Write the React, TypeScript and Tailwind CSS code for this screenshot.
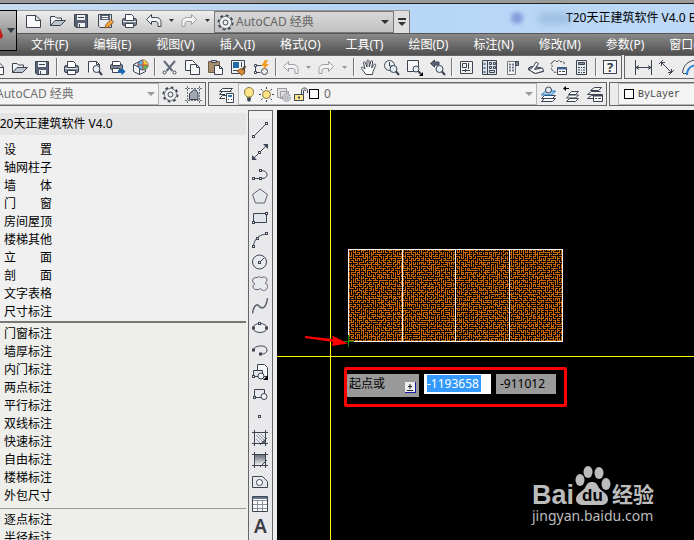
import type { ReactNode } from 'react';

interface IconProps {
  children: ReactNode;
  size?: 16 | 17;
  muted?: boolean;
}

function Icon({ children, size = 17, muted = false }: IconProps) {
  return (
    <svg
      width={size}
      height={size}
      viewBox={`0 0 ${size} ${size}`}
      fill="none"
      stroke={muted ? '#9a9da2' : '#3c4452'}
      className="shrink-0"
      aria-hidden="true"
    >
      {children}
    </svg>
  );
}

const lens = (
  <>
    <circle cx="10.5" cy="10" r="3.5" fill="#e4eef6" />
    <path d="M13 12.5l3 3.5" strokeWidth="2" />
  </>
);

const undoPath = 'M1.5 7.5l5-5v3h4c4 0 5.5 2 5.5 5v4h-3v-2.500c0-2-1-2.500-3-2.500H6.500v3z';

const icons = {
  new: <path d="M1.500 3.500h9.500l4.500 4.500v7.500h-14zM10.500 3.500v5h5" fill="#fafafa" />,
  open: (
    <>
      <path d="M1.500 13.500v-9h4.500l1.500 1.500h5v3" fill="#f4f5f6" />
      <path d="M1.500 13.500l4.500-5h10.500l-5 5z" fill="#bcc5ce" />
    </>
  ),
  save: (
    <>
      <path d="M1.500 2.500h13v13h-11.500l-1.500-1.500z" fill="#566273" />
      <path d="M4 3h8v5H4zM5 11h7v4H5z" fill="#f1f3f5" stroke="none" />
      <path d="M6.500 12v3M5 5.500h6" />
    </>
  ),
  saveAs: (
    <>
      <path d="M1.500 2.500h13v13h-11.500l-1.500-1.500z" fill="#e8eaec" />
      <path d="M3 3h10v5H3z" fill="#566273" stroke="none" />
      <path d="M5 4.500h6M5 6.500h6" stroke="#fff" />
      <path d="M8 16l1-3.500 5-5 2.500 2.500-5 5z" fill="#f3a53c" stroke="#8a5a2a" />
    </>
  ),
  print: (
    <>
      <rect x="1.500" y="6.500" width="14" height="7" rx="1.500" fill="#7c8693" />
      <path d="M4.500 8.500v-6h6l2 2v4z" fill="#fff" />
      <path d="M2 9.500h13" stroke="#e1e4e7" />
      <path d="M4.500 11.500h8v4h-8z" fill="#fff" />
    </>
  ),
  preview: (
    <>
      <path d="M2.500 13.500v-11h8l3 3v5" fill="#fafafa" />
      <path d="M10.500 2.500v3h3" />
      {lens}
    </>
  ),
  publish: (
    <>
      <rect x="1.500" y="5.500" width="12" height="5" rx="1" fill="#7c8693" />
      <path d="M3.500 6.500v-4h7l1 1v3z" fill="#fff" />
      <path d="M3.500 9.500h7v4h-7z" fill="#fff" />
      <path d="M9 11h3.500V8.500l4 4-4 4V14H9z" fill="#1768b5" stroke="none" />
    </>
  ),
  dwf: (
    <>
      <path d="M1.500 5.500l6-3 6 3v7l-6 3-6-3z" fill="#f3f4f5" />
      <path d="M1.500 5.500l6 3v7" />
      <circle cx="11" cy="6" r="5" fill="#5db6df" stroke="#547" />
      <path d="M11 6V1a5 5 0 0 1 5 5z" fill="#f0c93c" stroke="none" />
      <path d="M11 6h5a5 5 0 0 1-5 5z" fill="#68b44c" stroke="none" />
      <path d="M6 6h10M11 1v10" stroke="#d34b36" />
    </>
  ),
  cut: (
    <>
      <path d="M3 2l8.500 10M14 2L5.500 12" stroke="#646c79" strokeWidth="2" />
      <circle cx="3.500" cy="13.500" r="1.500" fill="#fff" />
      <circle cx="13.500" cy="13.500" r="1.500" fill="#fff" />
    </>
  ),
  copy: (
    <>
      <path d="M1.500 11.500v-10h7l3 3v7z" fill="#fafafa" />
      <path d="M6.500 15.500v-10h6l3 3v7z" fill="#fafafa" />
      <path d="M12.500 5.500v3h3" />
    </>
  ),
  paste: (
    <>
      <path d="M1.500 2.500h11v11h-11z" fill="#a98e6e" stroke="#6f5d49" />
      <path d="M4.500 1.500h5v2h-5z" fill="#c9ced4" />
      <path d="M7.500 15.500v-9h5l3 3v6z" fill="#fafafa" />
      <path d="M12.500 6.500v3h3" />
    </>
  ),
  match: (
    <>
      <path d="M1.500 1.500h13v13h-13z" fill="#f2f5f8" />
      <path d="M3 3h6v6H3z" fill="#236aa9" stroke="none" />
      <path d="M11.500 3v5M3 11.500h5" />
      <path d="M15.500 7l-3 3.500" stroke="#5c4631" strokeWidth="2" />
      <path d="M7 12l4-2.500 4 3-3 4z" fill="#d98a35" stroke="#8a5a2a" />
    </>
  ),
  blockEdit: (
    <>
      <path d="M2.500 13.500v-7h8M2.500 13.500h5" />
      <path d="M1.500 12.500h2v2h-2zM1.500 5.500h2v2h-2z" fill="#fff" />
      <circle cx="11.500" cy="12.500" r="3" fill="#f0f0f0" />
      <path d="M12 1L8 7h3l-1 4 6-6h-3l2-4z" fill="#f49b26" stroke="none" />
    </>
  ),
  undo: <path d={undoPath} fill="#f4f4f5" />,
  redo: <path d={undoPath} fill="#f4f4f5" transform="matrix(-1 0 0 1 17 0)" />,
  pan: (
    <path
      d="M6 15.500L1.500 9.500c-.7-1.200.6-2 1.600-1L5 10 3.500 4c-.2-1.300 1.400-1.600 1.800-.5L7 8V2c0-1.300 1.800-1.300 2 0l.3 6 1.500-5.500c.3-1.200 2-.8 1.800.5L11.700 9l2.300-3.500c.8-1 2.200-.2 1.600 1L13 12.500l-.5 3z"
      fill="#fff"
    />
  ),
  zoomRealtime: (
    <>
      <circle cx="6.500" cy="6.500" r="5" fill="#eef2f6" />
      <path d="M6.500 3v4h3.500" />
      {lens}
    </>
  ),
  zoomWindow: (
    <>
      <path d="M1.500 1.500h11v11h-11z" fill="#f6f7f8" />
      <circle cx="10" cy="10" r="3" fill="#e4eef6" />
      <path d="M12 12l3 3" strokeWidth="2" />
      <path d="M17 13v4h-4z" fill="#000" stroke="none" />
    </>
  ),
  zoomPrevious: (
    <>
      <path d="M1.500 4.500l4-3.500v2H10v3H5.500v2z" fill="#596576" />
      {lens}
    </>
  ),
  properties: (
    <>
      <path d="M2.500 2.500h12v12h-12z" fill="#f1f1ee" />
      <path d="M4.500 4.500h4v4h-4zM10.500 4v6M4 11.500h8M7.500 10v3" />
    </>
  ),
  designCenter: (
    <>
      <path d="M1.500 1.500h14v14h-14z" fill="#dfe3e7" />
      <path d="M6.500 1.500v14" />
      <path d="M3.500 4v2M3.500 8v2M3.500 12v2" strokeWidth="2" stroke="#5b7ba2" />
      <path d="M8.500 3.500h2v2h-2zM12.500 3.500h2v2h-2zM8.500 7.500h2v2h-2zM12.500 7.500h2v2h-2zM8.500 11.500h5v2h-5z" />
    </>
  ),
  palettes: (
    <>
      <path d="M3.500 2.500h8v13h-8z" fill="#f3f3f3" stroke="#727782" />
      <path d="M11.500 2.500h3v4h-3z" fill="#7c8693" />
      <path d="M5 5.500h2M8 5.500h2M5 8.500h2M8 8.500h2M5 11.500h2M8 11.500h2" stroke="#747b86" strokeWidth="2" />
    </>
  ),
  sheetSet: (
    <>
      <path d="M1 9.500l3-2 9.500 1 3 4-9 2z" fill="#8d96a1" />
      <path d="M1 10.500c5 0 6-5 8-7.500l2.500 1.500-4 6 8-1.500 1 3-8 2.500z" fill="#f5f6f7" />
    </>
  ),
  markup: (
    <>
      <path d="M3 3c1-2 3-2 4 0 1-2 3-2 4 0 2-1 4 0 3 3M3 3C0 4 1 6 2.500 7 1 8 1 11 3 11.500 3 13 5 14 7 13" strokeDasharray="3 1" />
      <path d="M7.500 8.500h9v7h-9z" fill="#fff" />
      <path d="M8 9.500h8" stroke="#3e6b9f" strokeWidth="2" />
      <path d="M9 12.500h2M12 12.500h3" />
    </>
  ),
  calculator: (
    <>
      <path d="M3.500 1.500h10v14h-10z" fill="#e7eaed" />
      <path d="M5.500 3.500h6v2h-6z" fill="#8e98a5" />
      <path d="M5 8.500h2M8 8.500h1M10 8.500h2M5 11h2M8 11h1M10 11h2M5 13.500h2M8 13.500h1M10 13.500h2" />
    </>
  ),
  dimLinear: <path d="M.500 1v15M16.500 1v15M1 8.500h15M4 6.500l-3 2 3 2M13 6.500l3 2-3 2" />,
  dimAligned: <path d="M1 5l4-4M11 16l5-5M3.500 3.500l10 10M3.500 7v-3.500H7M10 13.500h3.500V10" />,
  dimArc: (
    <>
      <path d="M1.500 14C2 6 8 1 16 1M2 14.500h3" />
      <path d="M6 16c0-6 4-10 11-10" stroke="#2f7fd1" strokeWidth="2" />
    </>
  ),
  gear: (
    <>
      <circle cx="8.500" cy="8.500" r="7" strokeWidth="2" strokeDasharray="2.750 2.748" />
      <circle cx="8.500" cy="8.500" r="6" fill="#f4f4f4" stroke="#6a717d" />
      <circle cx="8.500" cy="8.500" r="2.500" />
    </>
  ),
  workspace: (
    <>
      <path d="M2.500 0v17M14.500 0v17M0 2.500h17M0 14.500h17" stroke="#6a717d" strokeDasharray="2 1" />
      <path d="M4.500 13.500V7.500L8.500 4H11l2 3v6.500z" fill="#a0a6b0" />
    </>
  ),
  layerManager: (
    <>
      <path d="M1.500 12.500l3-3H8M1.500 8.500l3-3h9M1.500 12.500H7M1.500 8.500H7M4.500 2.500h10l-3 3h-10z" fill="#f7f7f7" />
      <path d="M8.500 7.500h7v9h-7z" fill="#fff" />
      <path d="M10 10h4" stroke="#2f74b5" strokeWidth="2" />
      <path d="M10 13.500h1M13 13.500h1" />
    </>
  ),
  layerCurrent: (
    <>
      <path d="M1.500 15.500l3-3h11l-3 3zM1.500 12.500l3-3h11l-3 3z" fill="#f7f7f7" />
      <path d="M1.500 9l4-4h10l-4 4z" fill="#a9d3ef" stroke="#1c74bb" />
      <circle cx="8.500" cy="4" r="3" fill="#dfeaf2" />
    </>
  ),
  layerPrevious: (
    <>
      <path d="M3.500 15.500l3-3h9l-3 3zM3.500 12l3-3h9l-3 3zM5.500 8.500l3-3h7l-3 3z" fill="#f7f7f7" />
      <path d="M3 0L0 2.500 3 5V3h3V2H3z" fill="#000" stroke="none" />
    </>
  ),
  layerStates: (
    <>
      <path d="M1.500 12.500l4-3h8M1.500 8.500l4-3h9M4.500 4.500l4-3h7l-3 3zM1.500 12.500H7M1.500 8.500h12" fill="#f7f7f7" />
      <path d="M7.500 8.500h9v7h-9z" fill="#fff" />
      <path d="M8 9.500h8" strokeWidth="2" />
      <path d="M9 12.500h2M12 12.500h3" />
    </>
  ),
  bulb: (
    <>
      <path d="M6 11C4 9 3.500 8 3.500 6c0-6 9-6 9 0 0 2-.5 3-2.500 5z" fill="#ffe58a" stroke="#8d7435" />
      <path d="M6 12.500h4M6.500 14.500h3" strokeWidth="2" />
    </>
  ),
  sun: (
    <>
      <circle cx="8.500" cy="8.500" r="4" fill="#ffe58a" stroke="#8d7435" />
      <path d="M8.500 1v2M8.500 14v2M1 8.500h2M14 8.500h2M3 3l1.500 1.500M12.500 12.500L14 14M14 3l-1.500 1.500M4.500 12.500L3 14" />
    </>
  ),
  freeze: (
    <>
      <path d="M2.500 2.500h9v9h-9zM5.500 5.500h8v7h-8z" fill="#e3e3e3" />
      <circle cx="11.500" cy="11.500" r="4" fill="#c5c7ca" strokeDasharray="2 1" />
      <circle cx="11.500" cy="11.500" r="1" fill="#fff" />
    </>
  ),
  unlock: (
    <>
      <path d="M2.500 8.500h9v6h-9z" fill="#ffe58a" />
      <path d="M9.500 8.500V5c0-4 6-4 6 0v2M11.500 8V5c0-1.500 2-1.500 2 0" />
      <path d="M7 10.500v2" strokeWidth="2" />
    </>
  ),
};

type IconName = keyof typeof icons;

interface ToolProps {
  icon: IconName;
  label: string;
  muted?: boolean;
}

function Tool({ icon, label, muted }: ToolProps) {
  return (
    <button aria-label={label} className="flex h-full w-[23px] shrink-0 items-center justify-center">
      <Icon muted={muted}>{icons[icon]}</Icon>
    </button>
  );
}

function Caret({ label, muted = false }: { label: string; muted?: boolean }) {
  return (
    <button aria-label={label} className="flex h-full w-[13px] shrink-0 items-center justify-center">
      <svg width="5" height="3" className={muted ? 'fill-[#999999]' : 'fill-[#333333]'} aria-hidden="true">
        <path d="M0 0h5L2.500 3z" />
      </svg>
    </button>
  );
}

function Divider() {
  return <span className="mx-[2px] h-[18px] w-[2px] shrink-0 border-l border-[#777777] bg-[#f8f8f8]" />;
}

function ComboArrow({ className }: { className: string }) {
  return (
    <svg width="8" height="4" className={`shrink-0 ${className}`} aria-hidden="true">
      <path d="M0 0h8L4 4z" />
    </svg>
  );
}

const menus = [
  '文件(F)', '编辑(E)', '视图(V)', '插入(I)', '格式(O)', '工具(T)',
  '绘图(D)', '标注(N)', '修改(M)', '参数(P)', '窗口(W)',
];

const commandGroups = [
  ['设置', '轴网柱子', '墙体', '门窗', '房间屋顶', '楼梯其他', '立面', '剖面', '文字表格', '尺寸标注'],
  ['门窗标注', '墙厚标注', '内门标注', '两点标注', '平行标注', '双线标注', '快速标注', '自由标注', '楼梯标注', '外包尺寸'],
  ['逐点标注', '半径标注'],
];

const grip = (x: number, y: number) => (
  <rect x={x} y={y} width="2" height="2" fill="#fff" />
);

const drawTools: { label: string; art: ReactNode }[] = [
  { label: '直线', art: <><path d="M2 14L14 2" />{grip(0.5, 13.5)}{grip(13.5, 0.5)}</> },
  {
    label: '构造线',
    art: (
      <>
        <path d="M2 14L14 2" />
        <path d="M11 0h5v5zM0 11v5h5z" fill="#3c4452" stroke="none" />
        {grip(6.5, 7.5)}
      </>
    ),
  },
  { label: '多段线', art: <><path d="M2 12.500h8c7 0 7-8-1-8" />{grip(0.5, 11.5)}{grip(7.5, 11.5)}{grip(7.5, 3.5)}</> },
  { label: '正多边形', art: <path d="M8 1l7.500 5.500-3 8.500h-9l-3-8.500z" fill="#e6e8ec" stroke="#5b626e" /> },
  { label: '矩形', art: <><path d="M1.500 3.500h13v9h-13z" fill="#e1e4ea" />{grip(0.5, 11.5)}{grip(13.5, 2.5)}</> },
  { label: '圆弧', art: <><path d="M1.500 14C2 8 6 3 14 2" />{grip(0.5, 13.5)}{grip(4.5, 5.5)}{grip(13.5, 0.5)}</> },
  { label: '圆', art: <><circle cx="7.500" cy="8" r="7" fill="#e8eaee" /><path d="M8 8l4-4" />{grip(6.5, 7.5)}</> },
  {
    label: '修订云线',
    art: (
      <path
        d="M5 1.500c2-1.500 4-.5 4 .5 2-2 6-1 6 2 0 2-1.500 2.500-2 3 3 1 3 4 1.500 6-1 2-5 2-6-.5C6 14.500 1 14 1 10.500 1 9 2 8.500 3 8-1 6 0 1 5 1.500z"
        fill="#e8eaee"
        stroke="#5b626e"
      />
    ),
  },
  { label: '样条曲线', art: <path d="M.500 15.500C1 10 4 5 6.500 7.500 9 11 14 12 15.500 0" stroke="#5b626e" strokeWidth="1.500" /> },
  { label: '椭圆', art: <><ellipse cx="8" cy="8" rx="7" ry="4.500" fill="#eef0f3" />{grip(0.5, 7)}{grip(6.5, 2.5)}{grip(13.5, 7)}</> },
  { label: '椭圆弧', art: <><path d="M1.500 8C2 3 15 2 15 8c0 3-3 4-6 4" />{grip(0.5, 7)}{grip(7.5, 11)}</> },
  {
    label: '插入块',
    art: (
      <>
        <path d="M5.500 9.500v-9h7l3 3v9h-8" fill="#f5f6f7" />
        <path d="M1.500 12.500v-6h9v6z" fill="#e1e4ea" />
        <circle cx="9" cy="12" r="3" fill="#f5f6f7" />
        {grip(0.5, 11.5)}
        <path d="M16 11v5h-5z" fill="#000" stroke="none" />
      </>
    ),
  },
  { label: '创建块', art: <><path d="M2.500 11.500v-8h10v8z" fill="#e8eaee" /><circle cx="12" cy="10.500" r="3" fill="#f5f6f7" />{grip(1.5, 10.5)}</> },
  { label: '点', art: grip(6.5, 7.5) },
  {
    label: '图案填充',
    art: (
      <>
        <path d="M2.500 0v16M13.500 0v16M0 2.500h16M0 13.500h16" />
        <path d="M4 9l4 4M4 5l8 8M6 4l7 7M9 4l4 4" stroke="#9298a4" />
        <path d="M13 9v4H9z" fill="#6c7380" stroke="none" />
        <path d="M8 15l7-7" />
      </>
    ),
  },
  {
    label: '渐变色',
    art: (
      <>
        <path d="M3 3h10v10H3z" fill="url(#tool-gradient)" stroke="none" />
        <path d="M2.500 0v16M13.500 0v16M0 2.500h16M0 13.500h16" />
        <path d="M8 15l7-7" />
        <defs>
          <linearGradient id="tool-gradient" x1="0" y1="0" x2="0" y2="1">
            <stop offset="0" stopColor="#6b7079" />
            <stop offset="1" stopColor="#eeeeee" />
          </linearGradient>
        </defs>
      </>
    ),
  },
  { label: '面域', art: <><path d="M.500 13.500v-11h10l5 5v6z" fill="#e6e8ec" /><circle cx="7.500" cy="8.500" r="3" fill="#fff" /></> },
  {
    label: '表格',
    art: (
      <>
        <path d="M.500 .500h15v15H.500z" fill="#fafafa" />
        <path d="M1 2h14" stroke="#66778c" strokeWidth="2" />
        <path d="M1 4.500h14M1 8.500h14M1 12.500h14M5.500 4v11M10.500 4v11" stroke="#8b919b" />
      </>
    ),
  },
];

const HATCH_W = 214;
const HATCH_H = 92;

// Every odd node of the grid is filled together with one random neighbour.
function buildHatch() {
  let state = 7919;
  const next = () => {
    state = (state + 0x6d2b79f5) | 0;
    let t = Math.imul(state ^ (state >>> 15), 1 | state);
    t = (t + Math.imul(t ^ (t >>> 7), 61 | t)) ^ t;
    return ((t ^ (t >>> 14)) >>> 0) / 4294967296;
  };
  const cells = ['h2v1h-2z', 'h1v2h-1z', 'h1v1h-2v-1z', 'v-1h1v2h-1z'];
  let d = '';
  for (let y = 1; y < HATCH_H; y += 2) {
    for (let x = 1; x < HATCH_W; x += 2) {
      d += `M${x} ${y}${cells[Math.floor(next() * cells.length)]}`;
    }
  }
  return d;
}

const hatch = buildHatch();

function Drawing() {
  return (
    <svg width="270" height="112" viewBox="300 240 270 112" className="absolute left-[23px] top-[130px]" aria-hidden="true">
      <g transform="translate(348 249)" shapeRendering="crispEdges">
        <path d={hatch} fill="#cb6500" />
        <path d="M.500 .500h214v92H.500zM54.500 0v92M107.500 0v92M161.500 0v92" fill="none" stroke="#f4f1ec" />
        <path d="M.500 86v12M-5 92.500H6" stroke="#008a00" fill="none" />
      </g>
      <path d="M305 336l28 3-1-3.500 16 8-16 2.500 1-4-28-4z" fill="#ff0000" />
    </svg>
  );
}

function DynamicInput() {
  return (
    <div className="absolute left-[67px] top-[257px] flex h-10 w-[223px] items-start rounded-[2px] border-[3px] border-[#ff0000] pt-1 leading-5 text-black">
      <div className="flex h-[23px] w-[72px] items-start justify-between bg-[#999999] pl-[2px] pr-[3px]">
        <label htmlFor="coord-x">起点或</label>
        <button aria-label="选项" className="mt-2 shrink-0">
          <svg width="11" height="11" className="block" aria-hidden="true">
            <path d="M0 0h11v11H0z" fill="#1b1ba5" />
            <path d="M0 0h10v10H0z" fill="#eeeeee" />
            <path d="M5 2v5M3 4.500h4M2 8.500h6" stroke="#222" />
          </svg>
        </button>
      </div>
      <div className="ml-[5px] h-5 w-[67px] bg-white p-px pl-[3px]">
        <input
          id="coord-x"
          defaultValue="-1193658"
          className="block h-[17px] w-[54px] bg-[#3399ff] text-white outline-none"
        />
      </div>
      <input
        aria-label="Y"
        defaultValue="-911012"
        className="ml-[5px] h-5 w-[60px] bg-[#999999] pl-1 outline-none"
      />
    </div>
  );
}

function Watermark() {
  return (
    <div className="absolute bottom-[13px] right-9 text-[#bcbcbc]">
      <svg width="126" height="39" viewBox="0 0 126 39" fill="#bcbcbc" className="block" role="img" aria-label="Bai du 经验">
        <text x="0" y="38" className="font-['Liberation_Sans',sans-serif] text-[27px] font-bold">Bai</text>
        <g transform="translate(-1 0)">
          <ellipse cx="49" cy="14" rx="4.500" ry="6" />
          <ellipse cx="57" cy="6" rx="4.500" ry="6" />
          <ellipse cx="68" cy="7" rx="4.500" ry="6" />
          <ellipse cx="75" cy="18" rx="4.500" ry="6" />
          <path d="M61 16c4 0 5 2 7 6 2 3 9 5 9 11 0 4-3 6-7 6H53c-5 0-8-2-8-6 0-5 7-8 9-11 2-4 3-6 7-6z" />
        </g>
        <text x="50" y="35" fill="#000" className="font-['Liberation_Sans',sans-serif] text-[17px] font-bold">du</text>
        <text x="80" y="36" className="font-['Noto_Sans_CJK_SC',sans-serif] text-[21px] font-bold">经验</text>
      </svg>
      <a href="#jingyan" className="block text-[14px] leading-[22px]">jingyan.baidu.com</a>
    </div>
  );
}

function TitleBar() {
  return (
    <header className="flex h-[34px] shrink-0 items-end overflow-hidden border-b border-[#555555] border-t-[3px] border-t-[#9b9b9b] bg-linear-to-r from-[#c7dcf1] via-[#b6d5f6] to-[#bdd9f7] pl-[17px] shadow-[inset_0_1px_0_#222222]">
      <div className="flex h-[23px] shrink-0 items-center border-t border-[#999999] bg-linear-to-b from-[#eeeeee] to-[#c9c9c9]">
        <div className="flex items-center gap-[7px] pb-[3px] pl-2">
          <button aria-label="新建"><Icon>{icons.new}</Icon></button>
          <button aria-label="打开"><Icon>{icons.open}</Icon></button>
          <button aria-label="保存"><Icon>{icons.save}</Icon></button>
          <button aria-label="另存为"><Icon>{icons.saveAs}</Icon></button>
          <button aria-label="打印"><Icon>{icons.print}</Icon></button>
          <button aria-label="放弃"><Icon>{icons.undo}</Icon></button>
        </div>
        <div className="flex w-[52px] items-center justify-between pb-[3px] pl-[3px]">
          <Caret label="放弃列表" />
          <button aria-label="重做"><Icon muted>{icons.redo}</Icon></button>
          <Caret label="重做列表" />
        </div>
        <div className="flex h-full w-[180px] items-center border border-[#777777] bg-linear-to-b from-[#d8d8d8] to-[#c2c2c2] pl-[2px] pr-1">
          <Icon>{icons.gear}</Icon>
          <select aria-label="工作空间" className="ml-[2px] min-w-0 flex-1 appearance-none bg-transparent text-[#666666] outline-none">
            <option>AutoCAD 经典</option>
          </select>
          <ComboArrow className="fill-[#333333]" />
        </div>
        <button aria-label="自定义" className="flex h-full w-4 flex-col items-center justify-center gap-[2px] border-r border-[#777777] bg-[#dedede]">
          <span className="h-[2px] w-2 bg-[#333333]" />
          <ComboArrow className="fill-[#333333]" />
        </button>
      </div>
      <div className="flex h-full min-w-0 flex-1 items-center justify-end overflow-hidden">
        <span className="size-3 shrink-0 rounded-full bg-[#6f83d0] opacity-70 blur-[2px]" />
        <span className="ml-4 h-[9px] w-8 shrink-0 bg-[#7799bd] opacity-50 blur-[4px]" />
        <h1 className="ml-[-5px] w-[128px] shrink-0 overflow-hidden whitespace-nowrap text-black">
          T20天正建筑软件 V4.0 By Tangent
        </h1>
      </div>
    </header>
  );
}

function MenuBar() {
  return (
    <nav className="flex h-[21px] shrink-0 items-center gap-[25px] overflow-hidden whitespace-nowrap bg-linear-to-b from-[#8a8a8a] to-[#505050] pl-[31px] text-white">
      {menus.map((name) => (
        <button key={name} className="shrink-0">{name}</button>
      ))}
    </nav>
  );
}

function StandardToolbar() {
  return (
    <div className="flex h-6 shrink-0 gap-[2px] overflow-hidden">
      <div className="-ml-[15px] flex shrink-0 items-center border-y border-r border-[#666666] bg-[#ececed]">
        <Tool icon="new" label="新建" />
        <Tool icon="open" label="打开" />
        <Tool icon="save" label="保存" />
        <Divider />
        <Tool icon="print" label="打印" />
        <Tool icon="preview" label="打印预览" />
        <Tool icon="publish" label="发布" />
        <Tool icon="dwf" label="三维 DWF" />
        <Divider />
        <Tool icon="cut" label="剪切" />
        <Tool icon="copy" label="复制" />
        <Tool icon="paste" label="粘贴" />
        <Tool icon="match" label="特性匹配" />
        <Tool icon="blockEdit" label="块编辑器" />
        <Divider />
        <Tool icon="undo" label="放弃" muted />
        <Caret label="放弃列表" muted />
        <Tool icon="redo" label="重做" muted />
        <Caret label="重做列表" muted />
        <Divider />
        <Tool icon="pan" label="实时平移" />
        <Tool icon="zoomRealtime" label="实时缩放" />
        <Tool icon="zoomWindow" label="窗口缩放" />
        <Tool icon="zoomPrevious" label="缩放上一个" />
        <Divider />
        <Tool icon="properties" label="特性" />
        <Tool icon="designCenter" label="设计中心" />
        <Tool icon="palettes" label="工具选项板" />
        <Tool icon="sheetSet" label="图纸集管理器" />
        <Tool icon="markup" label="标记集管理器" />
        <Tool icon="calculator" label="快速计算器" />
        <Divider />
        <button aria-label="帮助" className="mx-[4px] flex size-[14px] items-center justify-center border border-[#3c4452] bg-[#f5f5f5] text-[13px] font-bold leading-none text-[#333b49]">
          ?
        </button>
      </div>
      <div className="flex min-w-0 flex-1 items-center overflow-hidden border-y border-l border-[#666666] bg-[#ececed] pl-[7px]">
        <Tool icon="dimLinear" label="线性" />
        <Tool icon="dimAligned" label="对齐" />
        <Tool icon="dimArc" label="弧长" />
      </div>
    </div>
  );
}

function LayerToolbar() {
  return (
    <div className="mt-[3px] flex h-6 shrink-0 gap-[2px] overflow-hidden">
      <div className="flex shrink-0 items-center border-y border-r border-[#666666] bg-[#ececed]">
        <div className="flex h-full w-[159px] items-center border border-l-0 border-[#b5b5b5] bg-[#f4f4f4] pr-[3px]">
          <select aria-label="工作空间" className="-ml-1 min-w-0 flex-1 appearance-none bg-transparent text-[#707070] outline-none">
            <option>AutoCAD 经典</option>
          </select>
          <ComboArrow className="fill-[#999999]" />
        </div>
        <Tool icon="gear" label="工作空间设置" />
        <Tool icon="workspace" label="我的工作空间" />
      </div>
      <div className="flex shrink-0 items-center border border-[#666666] bg-[#ececed] pl-[6px]">
        <Tool icon="layerManager" label="图层特性管理器" />
        <div className="flex h-full w-[299px] items-center border border-[#b5b5b5] bg-[#f4f4f4] pl-[2px] pr-[3px]">
          <Icon>{icons.bulb}</Icon>
          <Icon>{icons.sun}</Icon>
          <Icon muted>{icons.freeze}</Icon>
          <Icon>{icons.unlock}</Icon>
          <span className="size-[10px] shrink-0 border border-black bg-white" />
          <select aria-label="图层" className="ml-[5px] min-w-0 flex-1 appearance-none bg-transparent text-[#666666] outline-none">
            <option>0</option>
          </select>
          <ComboArrow className="fill-[#999999]" />
        </div>
        <Tool icon="layerCurrent" label="置为当前图层" />
        <Tool icon="layerPrevious" label="上一个图层" />
        <Tool icon="layerStates" label="图层状态管理器" />
      </div>
      <div className="flex min-w-0 flex-1 items-center overflow-hidden border-y border-l border-[#666666] bg-[#ececed] pl-2">
        <div className="flex h-full flex-1 items-center border-y border-l border-[#b5b5b5] bg-[#f4f4f4] pl-[5px]">
          <span className="size-[10px] shrink-0 border border-black bg-white" />
          <select aria-label="颜色" className="ml-1 min-w-0 flex-1 appearance-none bg-transparent pt-px font-['Liberation_Mono',monospace] text-[10px] text-[#444444] outline-none">
            <option>ByLayer</option>
          </select>
        </div>
      </div>
    </div>
  );
}

function CommandPanel() {
  return (
    <aside className="w-[246px] shrink-0 overflow-hidden bg-[#f0f0f0]">
      <h2 className="mb-[6px] mt-[3px] h-[22px] whitespace-nowrap rounded-r-[3px] bg-[#e4e4e4] leading-[22px]">
        <span className="-ml-[7px]">T20天正建筑软件 V4.0</span>
      </h2>
      {commandGroups.map((group, index) => (
        <ul
          key={group[0]}
          className={
            index === 0
              ? 'border-b-2 border-[#777777]'
              : 'border-b border-[#999999] bg-[#eeefeb] pb-[3px] pt-[2px]'
          }
        >
          {group.map((name) => (
            <li key={name} className="h-[18px]">
              <button className="ml-1 flex h-[18px] w-12 items-center justify-between">
                {[...name].map((char, i) => (
                  <span key={i}>{char}</span>
                ))}
              </button>
            </li>
          ))}
        </ul>
      ))}
    </aside>
  );
}

function DrawToolbar() {
  return (
    <div className="ml-[2px] mr-1 w-[25px] shrink-0 overflow-hidden border border-b-0 border-[#666666] bg-[#e9e9eb]">
      <div className="h-2 bg-[#f0f0f0]" />
      {drawTools.map(({ label, art }) => (
        <button key={label} aria-label={label} className="flex h-[22px] w-full items-center pl-[3px]">
          <Icon size={16}>{art}</Icon>
        </button>
      ))}
      <button className="flex h-[22px] w-full items-center justify-center font-['Noto_Sans',sans-serif] text-[19px] font-semibold text-[#3c3c44]">
        A
      </button>
    </div>
  );
}

export default function App() {
  return (
    <div className="relative flex h-screen flex-col overflow-hidden bg-[#eeeeee] font-['Noto_Sans','Noto_Sans_CJK_SC',sans-serif] text-[12px] leading-[18px] text-black">
      <TitleBar />
      <MenuBar />
      <button aria-label="应用程序菜单" className="absolute left-0 top-[10px] flex h-[41px] w-[17px] items-center border border-l-0 border-black bg-linear-to-b from-[#c5c5c5] to-[#777777]">
        <svg width="16" height="39" aria-hidden="true">
          <path d="M0 17l3 8-1 2-2 1z" fill="#c21c1c" />
          <path d="M7 17h8l-4 5z" fill="#333b49" />
        </svg>
      </button>
      <StandardToolbar />
      <LayerToolbar />
      <main className="mt-1 flex min-h-0 flex-1">
        <CommandPanel />
        <DrawToolbar />
        <section className="relative min-w-0 flex-1 overflow-hidden bg-black">
          <div className="absolute inset-y-0 left-[53px] w-px bg-[#ffff00]" />
          <div className="absolute inset-x-0 top-[246px] h-px bg-[#ffff00]" />
          <Drawing />
          <DynamicInput />
          <Watermark />
        </section>
      </main>
    </div>
  );
}
